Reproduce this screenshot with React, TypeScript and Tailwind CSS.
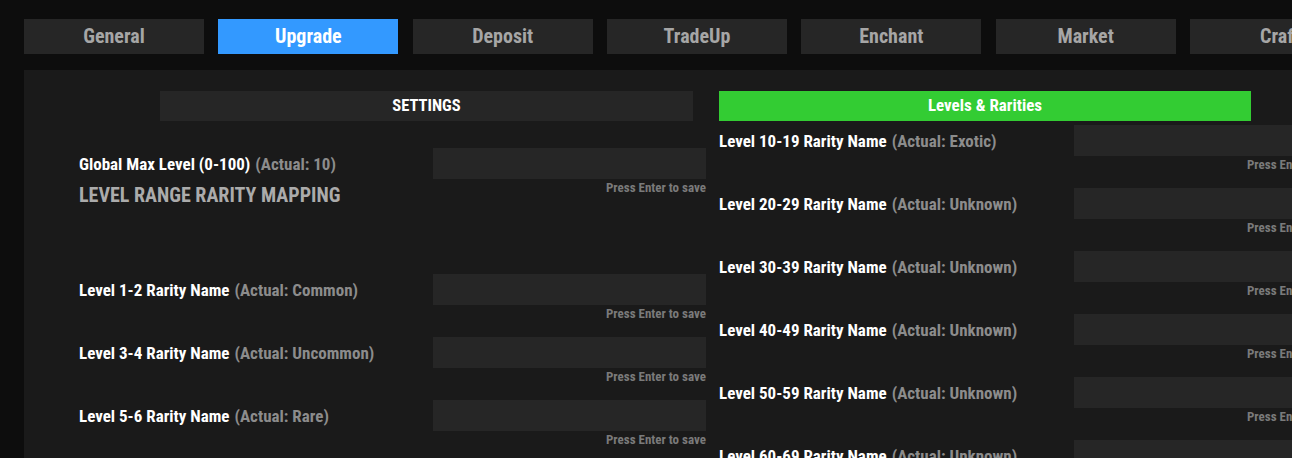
const tabs = ["General", "Upgrade", "Deposit", "TradeUp", "Enchant", "Market", "Craft"];

function Row({ label, actual }: { label: string; actual: string }) {
  return (
    <div className="flex h-[63px] shrink-0">
      <div className="flex-1 h-[31px] flex items-center whitespace-nowrap text-[17px] leading-none pt-[1px]">
        <span className="text-white">{label}</span>
        <span className="text-[#8c8c8c] ml-[5px]">(Actual: {actual})</span>
      </div>
      <div className="w-[273px] shrink-0 flex flex-col items-end">
        <div className="w-full h-[31px] bg-[#262626]" />
        <div className="mt-[2px] text-[13px] leading-[13px] text-[#7a7a7a] whitespace-nowrap">Press Enter to save</div>
      </div>
    </div>
  );
}

export default function App() {
  return (
    <div
      className="w-[1292px] h-[458px] overflow-hidden bg-[#0d0d0d] font-bold flex flex-col"
      style={{ fontFamily: "'Roboto Condensed', Roboto, sans-serif" }}
    >
      <div className="flex gap-[14.33px] pl-[24px] pt-[19px] shrink-0">
        {tabs.map((t) => (
          <div
            key={t}
            className={
              t === "Upgrade"
                ? "w-[180px] h-[35px] shrink-0 flex items-center justify-center bg-[#3399ff] text-white text-[20px] pb-[1px]"
                : "w-[180px] h-[35px] shrink-0 flex items-center justify-center bg-[#262626] text-[#a6a6a6] text-[20px] pb-[1px]"
            }
          >
            {t}
          </div>
        ))}
      </div>
      <div className="ml-[24px] mt-[16px] flex-1 bg-[#1a1a1a] flex">
        <div className="w-[695px] shrink-0 flex flex-col pl-[55px] pr-[13px]">
          <div className="ml-[81px] w-[533px] h-[30px] mt-[21px] bg-[#262626] flex items-center justify-center text-white text-[16.5px] shrink-0">
            SETTINGS
          </div>
          <div className="mt-[27px]">
            <Row label="Global Max Level (0-100)" actual="10" />
          </div>
          <div className="-mt-[28px] h-[24px] leading-[24px] text-[20px] text-[#ababab] whitespace-nowrap">
            LEVEL RANGE RARITY MAPPING
          </div>
          <div className="mt-[67px] flex flex-col">
            <Row label="Level 1-2 Rarity Name" actual="Common" />
            <Row label="Level 3-4 Rarity Name" actual="Uncommon" />
            <Row label="Level 5-6 Rarity Name" actual="Rare" />
          </div>
        </div>
        <div className="w-[628px] shrink-0 flex flex-col">
          <div className="w-[532px] h-[30px] mt-[21px] bg-[#33cc33] flex items-center justify-center text-white text-[17px] shrink-0">
            Levels &amp; Rarities
          </div>
          <div className="mt-[4px] flex flex-col">
            <Row label="Level 10-19 Rarity Name" actual="Exotic" />
            <Row label="Level 20-29 Rarity Name" actual="Unknown" />
            <Row label="Level 30-39 Rarity Name" actual="Unknown" />
            <Row label="Level 40-49 Rarity Name" actual="Unknown" />
            <Row label="Level 50-59 Rarity Name" actual="Unknown" />
            <Row label="Level 60-69 Rarity Name" actual="Unknown" />
          </div>
        </div>
      </div>
    </div>
  );
}
